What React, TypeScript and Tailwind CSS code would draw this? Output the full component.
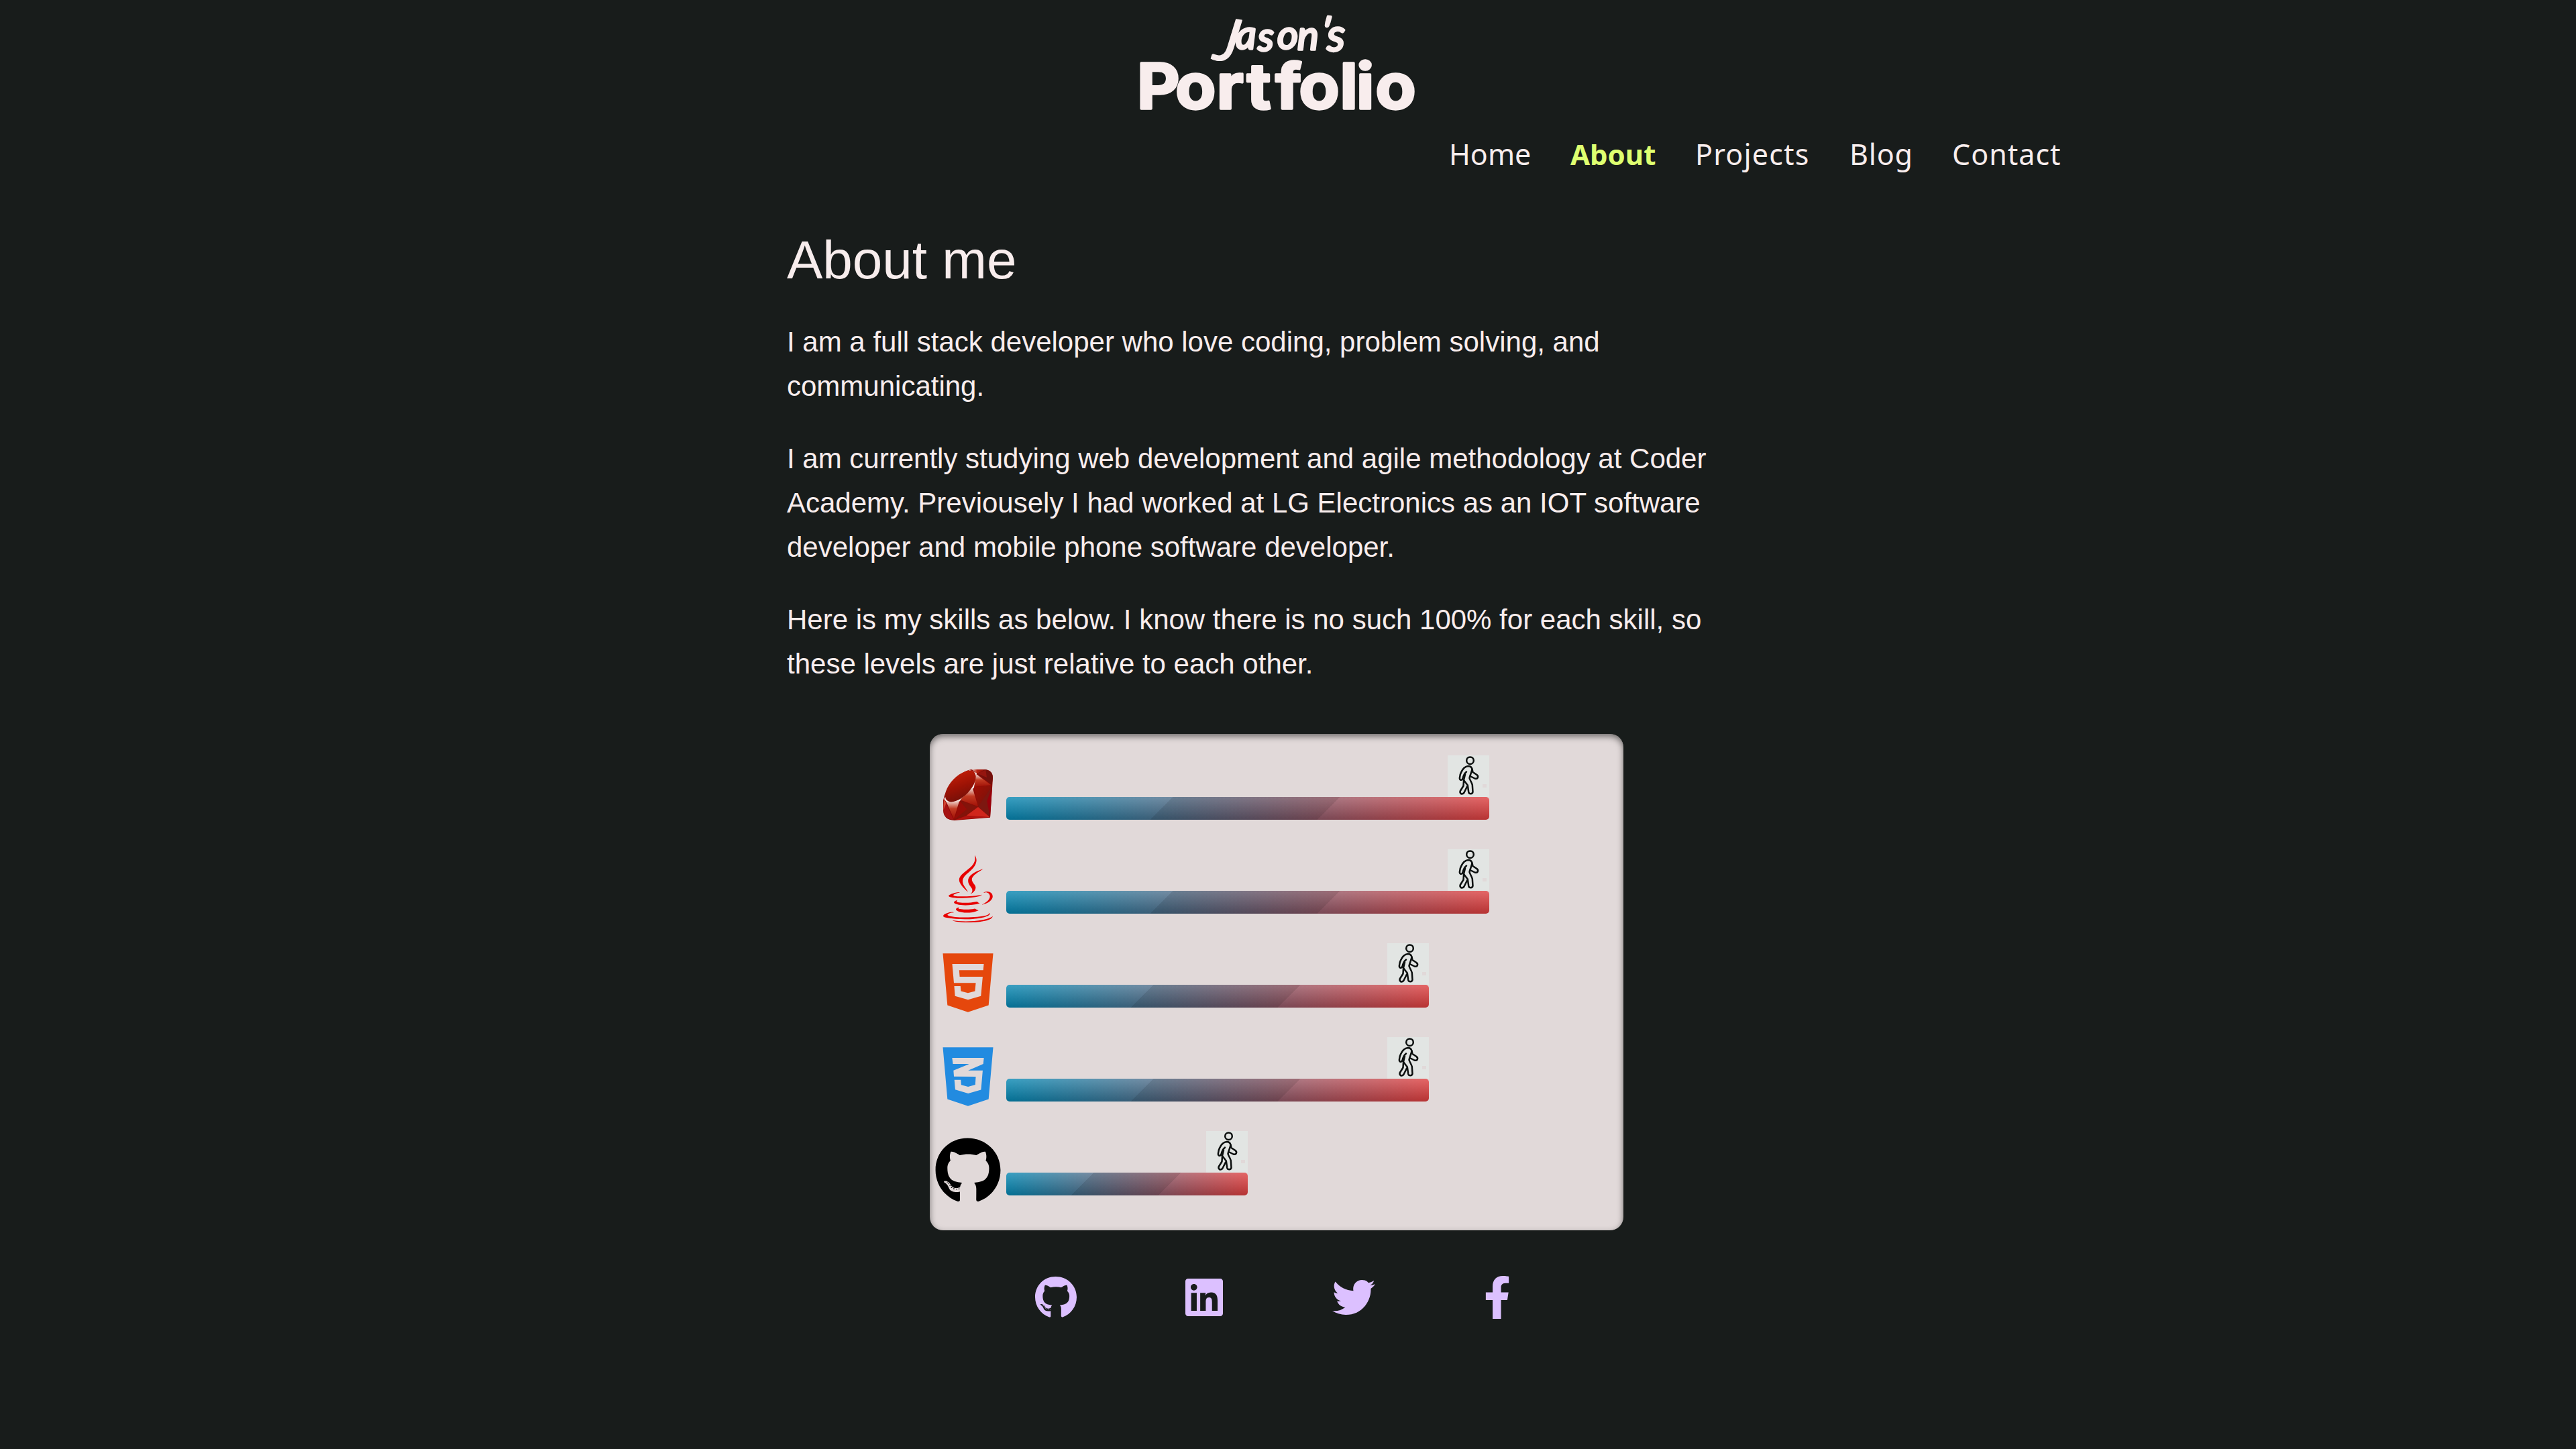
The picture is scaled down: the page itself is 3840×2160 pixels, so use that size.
import type { ReactNode } from "react";
import {
  FaCss3Alt,
  FaFacebookF,
  FaGithub,
  FaHtml5,
  FaJava,
  FaLinkedin,
  FaTwitter,
} from "react-icons/fa";

function Logo() {
  return (
    <svg
      className="block h-[180px] w-[488px] overflow-visible"
      viewBox="0 0 488 180"
      fill="#f8eded"
      stroke="#f8eded"
      strokeLinejoin="round"
    >
      <text fontFamily="Lato" fontStyle="italic" fontWeight="400" fontSize="60" strokeWidth="3.400">
        <tspan x="147" y="88" fontSize="90" strokeWidth="1.500" rotate="10">J</tspan>
        <tspan x="182 215 244 274" y="73 76 73 74">ason</tspan>
        <tspan x="307" y="66" rotate="8">'</tspan>
        <tspan x="318" y="76" fontSize="68">s</tspan>
      </text>
      <text
        fontFamily="Inter"
        fontWeight="700"
        fontSize="94"
        strokeWidth="3.4"
        transform="scale(1.05 1)"
        x="33 87.7 146.1 189 229.5 263 321.3 344.6 371.6"
        y="162"
      >
        Portfolio
      </text>
    </svg>
  );
}

function RubyIcon() {
  return (
    <svg className="h-[76px] w-[74px]" viewBox="108 198 222 228">
      <defs>
        <linearGradient id="ruby-table" x1="0" y1="1" x2="1" y2="0">
          <stop offset="0" stopColor="#e9b9ae" />
          <stop offset="0.16" stopColor="#7a1008" />
          <stop offset="0.5" stopColor="#9c1205" />
          <stop offset="1" stopColor="#c92109" />
        </linearGradient>
        <linearGradient id="ruby-facet" x1="0" y1="0" x2="0" y2="1">
          <stop offset="0" stopColor="#f3e4e0" />
          <stop offset="0.45" stopColor="#c23a22" />
          <stop offset="1" stopColor="#a01006" />
        </linearGradient>
        <linearGradient id="ruby-corner" x1="0" y1="0" x2="1" y2="0">
          <stop offset="0" stopColor="#efd8d2" />
          <stop offset="0.4" stopColor="#b8200f" />
          <stop offset="1" stopColor="#8d120c" />
        </linearGradient>
        <linearGradient id="ruby-dark" x1="0" y1="0" x2="1" y2="1">
          <stop offset="0" stopColor="#a00e04" />
          <stop offset="1" stopColor="#74140c" />
        </linearGradient>
      </defs>
      <path
        fill="#8f0b06"
        d="M240 198H292Q330 199 330 238L318 413 158 426Q108 424 108 378V336Q116 290 160 244T240 198Z"
      />
      <path fill="#f5edeb" d="M226 200 258 214 250 274 240 286 182 342 124 346 112 330Q150 250 226 200Z" />
      <path fill="url(#ruby-corner)" d="M236 198H296L260 216Z" />
      <path fill="#74100c" d="M260 216 296 199Q330 204 330 236L325 268Z" />
      <path fill="#95150f" d="M260 216 298 200 303 234Z" />
      <path fill="url(#ruby-facet)" d="M257 220 322 268 246 276Z" />
      <path fill="url(#ruby-dark)" d="M246 276 326 271 264 364Z" />
      <path fill="#7d1710" d="M326 272 316 412 264 364Z" />
      <path fill="#98000a" d="M327 272 318 412 304 340Z" />
      <path fill="url(#ruby-facet)" d="M239 280 264 364 184 334Z" />
      <path fill="#83130a" d="M184 336 264 365 210 404 158 424Z" />
      <path fill="#970c07" d="M182 338 214 376 158 422Z" />
      <path fill="#d0261c" d="M264 366 317 412 212 404Z" />
      <path fill="#b01310" d="M212 405 318 412 162 424Z" />
      <path fill="url(#ruby-facet)" d="M122 343 181 336 156 420Z" />
      <path fill="#a51212" d="M109 352 122 350 154 422Q112 420 109 378Z" />
      <path fill="#d0432f" d="M111 330 122 348 109 380Z" />
      <ellipse
        cx="185.500"
        cy="273"
        rx="88"
        ry="44"
        transform="rotate(-46 185.500 273)"
        fill="url(#ruby-table)"
      />
    </svg>
  );
}

function Walker() {
  return (
    <svg className="block size-[62px] bg-[#e2e5e3]" viewBox="0 0 62 62" fill="none">
      <g stroke="#0c100f" strokeWidth="2.500" strokeLinecap="round" strokeLinejoin="round">
        <circle cx="33.500" cy="7.700" r="5.300" />
        <path d="M28 24.500C25 27 23.500 30 22.500 34.500Q21.500 37.500 19 36.500 17.500 35.500 18 33 18.500 28 20 25.500C22 21 26 16.500 30.500 16 34.500 16 36 18.500 36.500 20.500L37.500 25 43.500 29Q46 31 44.700 33.500 43.300 35.500 40.500 34.500L34.500 31.500" />
        <path d="M36.500 20.500C36 25 33 30 32.500 34 33.500 37.500 36 40.500 36.800 44L37.500 54.500Q37 57.300 34.500 57.300 31.800 57.300 31.300 55L29.800 44.500 24 37 26 28.500" />
        <path d="M24 37.500 23.500 45.500 18.800 53Q17.800 55.700 20 57.300 22.800 58.300 24.500 55.500L29 46.500" />
      </g>
      <rect x="52" y="43" width="6" height="5" fill="#e1d9d9" />
    </svg>
  );
}

function Skill({ icon, width }: { icon: ReactNode; width: string }) {
  return (
    <li className="flex h-[140px]">
      <div className="mt-px ml-[7px] flex size-[100px] items-center justify-center text-[100px]">{icon}</div>
      <div className={`-mt-2 ml-[7px] flex flex-col items-end ${width}`}>
        <Walker />
        <div className="h-[34px] w-full rounded-[5px] bg-[linear-gradient(135deg,transparent_33%,rgba(0,0,0,0.1)_33%,rgba(0,0,0,0.1)_66%,transparent_66%),linear-gradient(to_bottom,rgba(175,175,175,0.32),rgba(8,8,8,0.29)),linear-gradient(to_right,#0099cc,#ff4444)]" />
      </div>
    </li>
  );
}

export default function App() {
  return (
    <div className="min-h-[2160px] w-[3840px] bg-[#181c1b] pr-8 font-['Liberation_Sans',sans-serif] text-[#f8eded]">
      <header className="flex h-[260px] flex-col items-center">
        <Logo />
        <nav className="mt-5 ml-[2160px] grid w-[920px] grid-cols-[181px_186px_230px_153px_169px] items-baseline self-start font-['Noto_Sans',sans-serif] text-[43px] leading-[60px] whitespace-nowrap">
          <a>Home</a>
          <a className="text-[42px] font-bold text-[#deff70]">About</a>
          <a className="tracking-[1.200px]">Projects</a>
          <a className="tracking-[0.800px]">Blog</a>
          <a className="tracking-[1px]">Contact</a>
        </nav>
      </header>

      <main className="ml-[1173px] w-[1440px] pt-[83px]">
        <h2 className="text-[80px] leading-[90px]">About me</h2>
        <div className="mt-11 flex flex-col gap-[42px] text-[42px] leading-[66px]">
          <p>I am a full stack developer who love coding, problem solving, and communicating.</p>
          <p>
            I am currently studying web development and agile methodology at Coder Academy. Previousely I
            had worked at LG Electronics as an IOT software developer and mobile phone software developer.
          </p>
          <p>
            Here is my skills as below. I know there is no such 100% for each skill, so these levels are
            just relative to each other.
          </p>
        </div>
      </main>

      <ul className="mt-[71px] ml-[1386px] h-[740px] w-[1034px] rounded-[20px] bg-[#e1d9d9] pt-10 shadow-[inset_0_4px_10px_rgba(0,0,0,0.5)]">
        <Skill icon={<RubyIcon />} width="w-[720px]" />
        <Skill icon={<FaJava className="text-[#e80000]" />} width="w-[720px]" />
        <Skill icon={<FaHtml5 className="text-[#e5470c]" />} width="w-[630px]" />
        <Skill icon={<FaCss3Alt className="text-[#228be0]" />} width="w-[630px]" />
        <Skill icon={<FaGithub className="text-black" />} width="w-[360px]" />
      </ul>

      <footer className="mt-[68px] ml-[1542.500px] flex gap-[162.500px] text-[64px] text-[#dcc0ff]">
        <FaGithub className="w-[62px]" />
        <FaLinkedin className="w-14" />
        <FaTwitter className="w-16" />
        <FaFacebookF className="w-10" />
      </footer>
    </div>
  );
}
